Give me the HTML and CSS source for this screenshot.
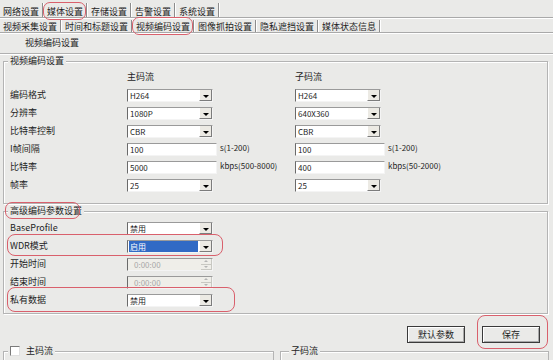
FILE: index.html
```html
<!DOCTYPE html>
<html lang="zh-CN">
<head>
<meta charset="UTF-8">
<meta name="viewport" content="width=device-width, initial-scale=1.0">
<title>视频编码设置</title>
<link rel="stylesheet" href="styles.css">
</head>
<body>

<nav class="tabs tabs-main">
    <span class="tab">网络设置</span>
    <span class="tab"><span class="mark">媒体设置</span></span>
    <span class="tab">存储设置</span>
    <span class="tab">告警设置</span>
    <span class="tab">系统设置</span>
</nav>
<nav class="tabs tabs-sub">
    <span class="tab">视频采集设置</span>
    <span class="tab">时间和标题设置</span>
    <span class="tab"><span class="mark">视频编码设置</span></span>
    <span class="tab">图像抓拍设置</span>
    <span class="tab">隐私遮挡设置</span>
    <span class="tab">媒体状态信息</span>
</nav>
<div class="page-title">视频编码设置</div>

<!-- 主/子码流编码参数 -->
<fieldset class="group group-enc">
    <legend>视频编码设置</legend>
    <div class="enc-head">
        <span></span>
        <span>主码流</span>
        <span>子码流</span>
    </div>
    <div class="enc-grid">
        <label>编码格式</label>
        <div class="cell"><div class="combo"><span class="text">H264</span><span class="drop"></span></div></div>
        <div class="cell"><div class="combo"><span class="text">H264</span><span class="drop"></span></div></div>

        <label>分辨率</label>
        <div class="cell"><div class="combo"><span class="text">1080P</span><span class="drop"></span></div></div>
        <div class="cell"><div class="combo"><span class="text">640X360</span><span class="drop"></span></div></div>

        <label>比特率控制</label>
        <div class="cell"><div class="combo"><span class="text">CBR</span><span class="drop"></span></div></div>
        <div class="cell"><div class="combo"><span class="text">CBR</span><span class="drop"></span></div></div>

        <label>I帧间隔</label>
        <div class="cell"><input class="field" type="text" value="100"><span class="unit">s(1-200)</span></div>
        <div class="cell"><input class="field" type="text" value="100"><span class="unit">s(1-200)</span></div>

        <label>比特率</label>
        <div class="cell"><input class="field" type="text" value="5000"><span class="unit">kbps(500-8000)</span></div>
        <div class="cell"><input class="field" type="text" value="400"><span class="unit">kbps(50-2000)</span></div>

        <label>帧率</label>
        <div class="cell"><div class="combo"><span class="text">25</span><span class="drop"></span></div></div>
        <div class="cell"><div class="combo"><span class="text">25</span><span class="drop"></span></div></div>
    </div>
</fieldset>

<!-- 高级参数 -->
<fieldset class="group group-adv">
    <legend><span class="mark mark-legend">高级编码参数设置</span></legend>
    <div class="adv-row">
        <label>BaseProfile</label>
        <div class="combo"><span class="text">禁用</span><span class="drop"></span></div>
    </div>
    <div class="adv-row mark-wdr">
        <label>WDR模式</label>
        <div class="combo focus"><span class="text">启用</span><span class="drop"></span></div>
    </div>
    <div class="adv-row">
        <label>开始时间</label>
        <div class="spin"><span class="text">0:00:00</span><span class="spin-btns"><span class="up"></span><span class="down"></span></span></div>
    </div>
    <div class="adv-row">
        <label>结束时间</label>
        <div class="spin"><span class="text">0:00:00</span><span class="spin-btns"><span class="up"></span><span class="down"></span></span></div>
    </div>
    <div class="adv-row mark-private">
        <label>私有数据</label>
        <div class="combo"><span class="text">禁用</span><span class="drop"></span></div>
    </div>
</fieldset>

<div class="actions">
    <button class="btn-cmd">默认参数</button>
    <span class="mark-save"><button class="btn-cmd">保存</button></span>
</div>

<div class="streams">
    <fieldset class="stream stream-main">
        <legend><span class="check"></span>主码流</legend>
    </fieldset>
    <fieldset class="stream stream-sub">
        <legend>子码流</legend>
    </fieldset>
</div>

</body>
</html>
```

FILE: styles.css
```css
body {
    margin: 0;
    width: 553px;
    height: 360px;
    overflow: hidden;
    background-color: #eaeae8;
    color: #1e1e1e;
    font-family: "Noto Sans CJK SC", "Liberation Sans", sans-serif;
    font-size: 9px;
    line-height: 11px;
}

/* 顶部标签栏 */
.tabs {
    display: flex;
    border-bottom: 1px solid #a9a9a9;
    box-shadow: 0 1px 0 #fff;
}
.tabs-main {
    padding-top: 3px;
}
.tabs-sub {
    padding-top: 2px;
}
.tab {
    padding: 3px 3px 0 4px;
    border-right: 1px solid #8c8c8c;
    box-shadow: 1px 0 0 #fff;
    white-space: nowrap;
}
.tabs-sub .tab {
    padding-top: 1px;
}
.tab:first-child {
    padding-left: 3px;
}
.mark {
    position: relative;
}
.mark::after {
    content: "";
    position: absolute;
    top: -3px;
    bottom: -2px;
    left: -4px;
    right: -3px;
    border: 1px solid #d9606c;
    border-radius: 7px;
}
.page-title {
    padding: 4px 0 5px 25px;
    border-bottom: 1px solid #b0b0b0;
    box-shadow: 0 1px 0 #fff;
}

/* 分组框 */
.group {
    margin: 1px 5px 0 3px;
    padding: 0 6px 8px 6px;
    border: 1px solid #b4b4b4;
    box-shadow: inset 1px 1px 0 #fff, 1px 1px 0 #fff;
    min-width: 0;
}
.group-enc {
    padding-bottom: 11px;
}
.group legend {
    padding: 0 2px;
    margin-left: -2px;
    line-height: 12px;
    background-color: #eaeae8;
}
.enc-head,
.enc-grid {
    display: grid;
    grid-template-columns: 117px 168px 1fr;
}
.enc-head {
    margin: 3px 0 6px;
    line-height: 13px;
}
.enc-grid {
    grid-auto-rows: 13px;
    row-gap: 5px;
}
.enc-grid label,
.adv-row label {
    line-height: 11px;
}
.cell {
    display: flex;
    align-items: flex-start;
}
.unit {
    margin-left: 3px;
    font-size: 8px;
    line-height: 10px;
}

/* 下拉框 */
.combo,
.spin {
    display: flex;
    width: 86px;
    height: 13px;
    box-sizing: border-box;
    background-color: #fff;
    border-top: 1px solid #9a9a9a;
    border-left: 1px solid #6a6a6a;
    border-right: 1px solid #f4f4f4;
    border-bottom: 1px solid #f4f4f4;
}
.combo .text,
.spin .text {
    flex: 1;
    padding-left: 2px;
    font-size: 8px;
    line-height: 11px;
}
.combo.focus .text {
    margin: 0 1px;
    padding-left: 1px;
    background-color: #316ac5;
    color: #fff;
}
.drop {
    position: relative;
    width: 11px;
    background-color: #eceae4;
    border-left: 1px solid #fff;
    border-right: 1px solid #7c7c7c;
    border-bottom: 1px solid #7c7c7c;
}
.drop::after {
    content: "";
    position: absolute;
    left: 3px;
    top: 5px;
    border-left: 3px solid transparent;
    border-right: 3px solid transparent;
    border-top: 3px solid #000;
}
.field {
    width: 90px;
    height: 13px;
    box-sizing: border-box;
    margin: 0;
    padding: 0 0 0 2px;
    background-color: #fff;
    border-top: 1px solid #9a9a9a;
    border-left: 1px solid #6a6a6a;
    border-right: 1px solid #f4f4f4;
    border-bottom: 1px solid #f4f4f4;
    font-family: "Noto Sans CJK SC", sans-serif;
    font-size: 8px;
    color: #1e1e1e;
}

/* 时间输入 */
.spin {
    background-color: #efeee9;
}
.spin .text {
    padding-left: 6px;
    color: #a8a8a8;
}
.spin-btns {
    display: flex;
    flex-direction: column;
    width: 11px;
}
.spin-btns span {
    position: relative;
    flex: 1;
    border-bottom: 1px solid #c8c8c2;
    border-right: 1px solid #c8c8c2;
}
.spin-btns .up::after,
.spin-btns .down::after {
    content: "";
    position: absolute;
    left: 3px;
    top: 1px;
    border-left: 2px solid transparent;
    border-right: 2px solid transparent;
}
.spin-btns .up::after {
    border-bottom: 2px solid #b4b4b4;
}
.spin-btns .down::after {
    border-top: 2px solid #b4b4b4;
}

/* 高级编码参数 */
.group-adv {
    margin-top: 1px;
    padding-bottom: 6px;
}
.group-adv legend {
    padding: 0 2px;
}
.mark-legend::after {
    top: -2px;
    bottom: -2px;
    left: -5px;
    right: 2px;
}
.adv-row {
    position: relative;
    display: grid;
    grid-template-columns: 117px 86px;
    height: 13px;
    margin-top: 5px;
}
.adv-row:first-of-type {
    margin-top: 5px;
}
.mark-wdr::after,
.mark-private::after {
    content: "";
    position: absolute;
    left: -3px;
    border: 1px solid #d9606c;
    border-radius: 8px;
}
.mark-wdr::after {
    top: -6px;
    width: 214px;
    height: 20px;
}
.mark-private::after {
    top: -7px;
    width: 226px;
    height: 23px;
}

/* 按钮 */
.actions {
    display: flex;
    justify-content: flex-end;
    gap: 17px;
    margin: 12px 13px 0 0;
}
.btn-cmd {
    display: block;
    width: 58px;
    height: 17px;
    padding: 0;
    background-color: #eaeae8;
    border: 1px solid #3a3a3a;
    box-shadow: inset 1px 1px 0 #fff, inset -1px -1px 0 #a8a8a8;
    font-family: "Noto Sans CJK SC", sans-serif;
    font-size: 9px;
    color: #1e1e1e;
}
.mark-save {
    position: relative;
}
.mark-save::after {
    content: "";
    position: absolute;
    top: -11px;
    bottom: -6px;
    left: -5px;
    right: -8px;
    border: 1px solid #d9606c;
    border-radius: 8px;
}

/* 底部码流 */
.streams {
    display: flex;
    gap: 6px;
    margin: 2px 0 0 3px;
}
.stream {
    margin: 0;
    height: 20px;
    border: 1px solid #b4b4b4;
    box-shadow: inset 1px 1px 0 #fff;
}
.stream legend {
    display: flex;
    align-items: center;
    padding: 0 2px;
    line-height: 12px;
    background-color: #eaeae8;
}
.stream-main {
    width: 271px;
    box-sizing: border-box;
    padding: 0 4px;
}
.stream-sub {
    width: 269px;
    box-sizing: border-box;
    padding: 0 8px;
}
.check {
    width: 8px;
    height: 8px;
    margin-right: 6px;
    background-color: #fff;
    border-top: 1px solid #7a7a7a;
    border-left: 1px solid #7a7a7a;
    border-right: 1px solid #e0e0e0;
    border-bottom: 1px solid #e0e0e0;
}
```
